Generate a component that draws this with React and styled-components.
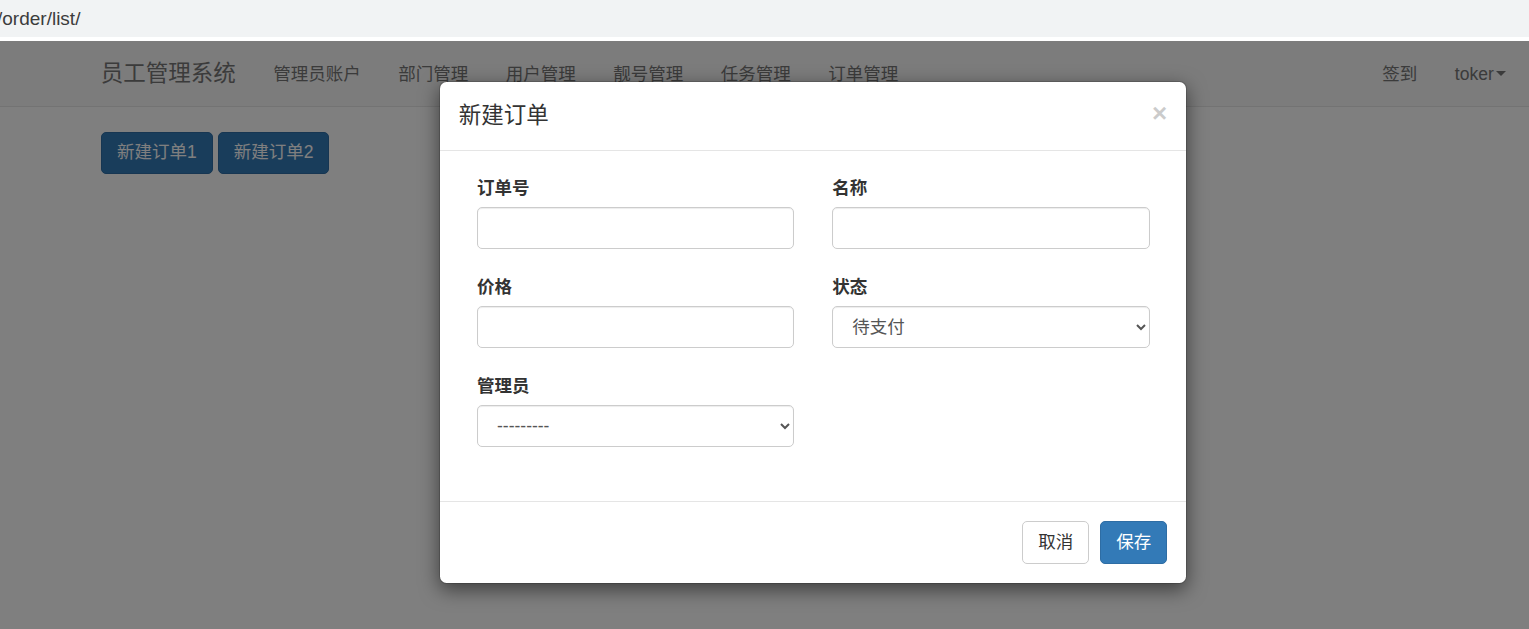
import React from "react"
import styled, { createGlobalStyle } from "styled-components"

const GlobalStyle = createGlobalStyle`
  html, body {
    margin: 0;
    padding: 0;
    height: 629px;
    overflow: hidden;
    background: #fff;
  }
  body {
    font-family: "Liberation Sans", Arial, "Noto Sans CJK SC", sans-serif;
    font-size: 17.5px;
    line-height: 1.42857;
    color: #333;
  }
  * {
    box-sizing: border-box;
  }
`

const navLinks = ["管理员账户", "部门管理", "用户管理", "靓号管理", "任务管理", "订单管理"]

const fields = [
  { label: "订单号", type: "input" },
  { label: "名称", type: "input" },
  { label: "价格", type: "input" },
  { label: "状态", type: "select", options: ["待支付", "已支付"] },
  { label: "管理员", type: "select", options: ["---------"] },
]

export default function App() {
  return (
    <>
      <GlobalStyle />
      <S.AddressBar>
        <S.Url>/order/list/</S.Url>
      </S.AddressBar>
      <S.Viewport>
        <S.Navbar>
          <S.Brand>员工管理系统</S.Brand>
          <S.NavList>
            {navLinks.map((item) => (
              <S.NavItem key={item}>{item}</S.NavItem>
            ))}
          </S.NavList>
          <S.NavRight>
            <S.NavItem>签到</S.NavItem>
            <S.NavItem>
              toker<S.Caret />
            </S.NavItem>
          </S.NavRight>
        </S.Navbar>
        <S.Content>
          <S.Button $primary>新建订单1</S.Button>
          <S.Button $primary>新建订单2</S.Button>
        </S.Content>

        <S.Backdrop />

        <S.Modal>
          <S.ModalHeader>
            <S.Title>新建订单</S.Title>
            <S.Close>×</S.Close>
          </S.ModalHeader>
          <S.ModalBody>
            {fields.map((f) => (
              <S.Group key={f.label}>
                <S.Label>{f.label}</S.Label>
                {f.type === "input" ? (
                  <S.Input type="text" />
                ) : (
                  <S.Select defaultValue={f.options[0]}>
                    {f.options.map((o) => (
                      <option key={o}>{o}</option>
                    ))}
                  </S.Select>
                )}
              </S.Group>
            ))}
          </S.ModalBody>
          <S.ModalFooter>
            <S.Button>取消</S.Button>
            <S.Button $primary>保存</S.Button>
          </S.ModalFooter>
        </S.Modal>
      </S.Viewport>
    </>
  )
}

const S = {
  AddressBar: styled.div`
    height: 37px;
    background: #f1f3f4;
    border-bottom: 4px solid #fff;
    box-sizing: content-box;
    display: flex;
    align-items: center;
    overflow: hidden;
  `,
  Url: styled.div`
    font-size: 19px;
    color: #3c3c3c;
    text-indent: -3px;
    white-space: nowrap;
  `,
  Viewport: styled.div`
    position: relative;
    height: 588px;
    overflow: hidden;
    background: #fff;
  `,
  Navbar: styled.div`
    height: 66px;
    background: #f8f8f8;
    border-bottom: 1.25px solid #e7e7e7;
    display: flex;
    align-items: center;
    padding: 1px 4px 0 82px;
  `,
  Brand: styled.div`
    font-size: 22.5px;
    color: #777;
    padding: 0 18.75px;
  `,
  NavList: styled.div`
    display: flex;
    flex: 1;
  `,
  NavRight: styled.div`
    display: flex;
  `,
  NavItem: styled.div`
    color: #777;
    padding: 0 18.75px;
    display: flex;
    align-items: center;
  `,
  Caret: styled.span`
    display: inline-block;
    width: 0;
    height: 0;
    margin-left: 2.5px;
    border-top: 5px solid #777;
    border-left: 5px solid transparent;
    border-right: 5px solid transparent;
  `,
  Content: styled.div`
    display: flex;
    gap: 5px;
    padding: 24.5px 0 0 101px;
  `,
  Button: styled.button`
    font-family: inherit;
    font-size: 17.5px;
    line-height: 1.42857;
    height: 42.5px;
    padding: 0 15px;
    border-radius: 5px;
    border: 1.25px solid ${(p) => (p.$primary ? "#2e6da4" : "#ccc")};
    background: ${(p) => (p.$primary ? "#337ab7" : "#fff")};
    color: ${(p) => (p.$primary ? "#fff" : "#333")};
    cursor: pointer;
  `,
  Backdrop: styled.div`
    position: absolute;
    inset: 0;
    background: rgba(0, 0, 0, 0.5);
  `,
  Modal: styled.div`
    position: absolute;
    top: 40px;
    left: 439px;
    width: 748px;
    background: #fff;
    border-radius: 7.5px;
    box-shadow: 0 6px 19px rgba(0, 0, 0, 0.5);
    border: 1px solid rgba(0, 0, 0, 0.15);
    background-clip: padding-box;
  `,
  ModalHeader: styled.div`
    display: flex;
    justify-content: space-between;
    align-items: center;
    padding: 18px 18.75px 18px 18.75px;
    border-bottom: 1px solid #e5e5e5;
  `,
  Title: styled.h4`
    margin: 0;
    font-size: 22.5px;
    font-weight: 400;
    line-height: 1.42857;
    color: #333;
  `,
  Close: styled.span`
    font-size: 26px;
    font-weight: 700;
    line-height: 1;
    color: #000;
    opacity: 0.2;
    margin-top: -6px;
  `,
  ModalBody: styled.div`
    display: grid;
    grid-template-columns: 1fr 1fr;
    column-gap: 38px;
    row-gap: 26px;
    padding: 25px 36.5px 54px 37px;
  `,
  Group: styled.div`
    display: flex;
    flex-direction: column;
    gap: 5.5px;
  `,
  Label: styled.label`
    font-weight: 700;
    color: #333;
    line-height: 25px;
  `,
  Input: styled.input`
    height: 42.5px;
    width: 100%;
    font-family: inherit;
    font-size: 17.5px;
    padding: 7.5px 15px;
    border: 1.25px solid #ccc;
    border-radius: 5px;
    box-shadow: inset 0 1px 1px rgba(0, 0, 0, 0.075);
    color: #555;
    outline: none;
  `,
  Select: styled.select`
    height: 42.5px;
    width: 100%;
    font-family: inherit;
    font-size: 17.5px;
    padding: 7.5px 15px;
    border: 1.25px solid #ccc;
    border-radius: 5px;
    box-shadow: inset 0 1px 1px rgba(0, 0, 0, 0.075);
    color: #555;
    background: #fff;
    outline: none;
  `,
  ModalFooter: styled.div`
    display: flex;
    justify-content: flex-end;
    gap: 11px;
    padding: 19px 18.75px;
    border-top: 1px solid #e5e5e5;
  `,
}
